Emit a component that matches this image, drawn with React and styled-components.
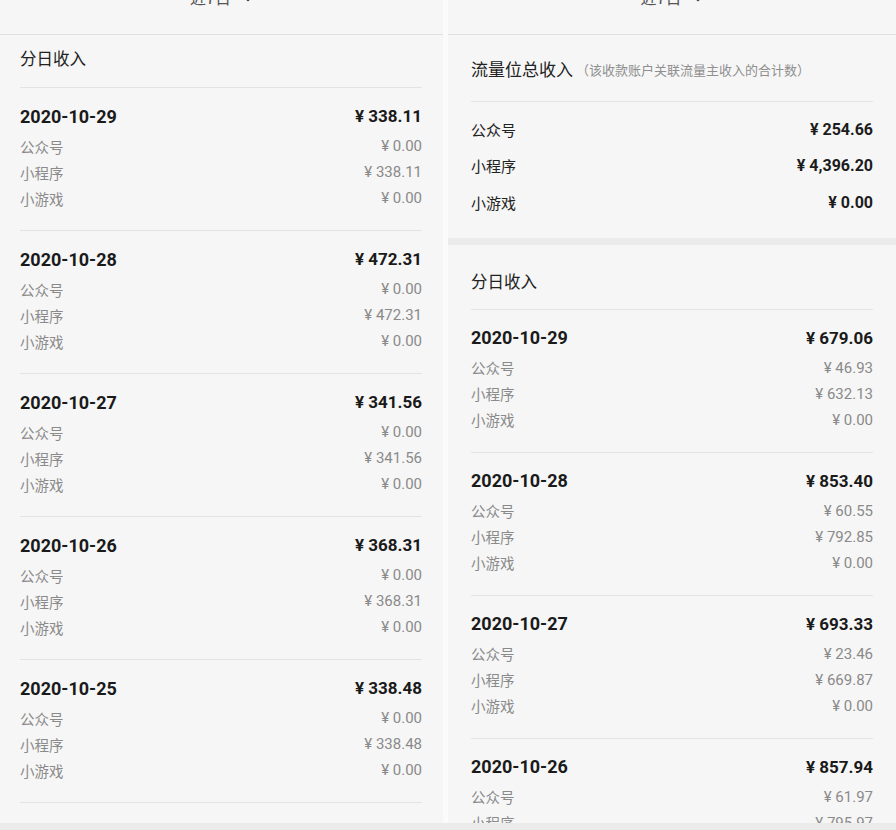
import React from "react";
import styled, { createGlobalStyle } from "styled-components";

const GlobalStyle = createGlobalStyle`
  html, body { margin: 0; padding: 0; background: #ebebeb; }
  body { font-family: Roboto, "Noto Sans CJK SC", "Noto Sans", sans-serif; }
  * { box-sizing: border-box; }
`;

const Screen = styled.div`
  width: 896px;
  height: 830px;
  overflow: hidden;
  background: #ebebeb;
`;

const Columns = styled.div`
  display: flex;
  gap: 5px;
  height: 823px;
  background: #fbfbfb;
`;

const Panel = styled.div`
  width: ${(p) => p.$width}px;
  flex: none;
  height: 100%;
  overflow: hidden;
  background: #f6f6f6;
  display: flex;
  flex-direction: column;
`;

const Header = styled.div`
  height: 35px;
  flex: none;
  border-bottom: 1px solid #e1e1e1;
  display: flex;
  justify-content: center;
  align-items: flex-start;
`;

const HeaderLabel = styled.div`
  margin-top: -15px;
  display: flex;
  align-items: center;
  gap: 12px;
  font-family: "Noto Sans CJK SC", Roboto, sans-serif;
  font-size: 16px;
  line-height: 24px;
  color: #555;
`;

const Content = styled.div`
  flex: none;
  padding: 0 ${(p) => p.$right}px 0 ${(p) => p.$left}px;
`;

const SectionTitle = styled.div`
  height: ${(p) => p.$top + p.$bottom + 25}px;
  padding: ${(p) => p.$top}px 0 ${(p) => p.$bottom}px;
  border-bottom: 1px solid #e3e3e3;
  font-family: "Noto Sans CJK SC", sans-serif;
  font-size: ${(p) => p.$size || 16.5}px;
  line-height: 24px;
  color: #222;
  display: flex;
  align-items: center;
  white-space: nowrap;
`;

const TitleNote = styled.span`
  font-size: 13px;
  line-height: 24px;
  color: #8f8f8f;
  margin-left: 3px;
  margin-top: 2px;
`;

const SummaryList = styled.div`
  padding: 9px 0 17px;
`;

const SummaryRow = styled.div`
  height: 36.5px;
  display: flex;
  align-items: center;
  justify-content: space-between;
`;

const SummaryLabel = styled.span`
  font-family: "Noto Sans CJK SC", sans-serif;
  font-size: 15px;
  color: #222;
`;

const SummaryValue = styled.span`
  font-family: Roboto, sans-serif;
  font-weight: 700;
  font-size: 16px;
  color: #1c1c1c;
`;

const Band = styled.div`
  height: 7px;
  flex: none;
  background: #ebebeb;
`;

const DayBlock = styled.div`
  padding: 16px 0 19px;
  border-bottom: 1px solid #e3e3e3;
`;

const DayHead = styled.div`
  height: 24px;
  margin-bottom: 5px;
  display: flex;
  align-items: center;
  justify-content: space-between;
  font-family: Roboto, sans-serif;
  font-weight: 700;
  color: #1a1a1a;
`;

const DayDate = styled.span`
  font-size: 18px;
`;

const DayTotal = styled.span`
  font-size: 17px;
`;

const SubRow = styled.div`
  height: 26px;
  display: flex;
  align-items: center;
  justify-content: space-between;
`;

const SubLabel = styled.span`
  font-family: "Noto Sans CJK SC", sans-serif;
  font-size: 14.5px;
  color: #8a8a8a;
`;

const SubValue = styled.span`
  font-family: Roboto, sans-serif;
  font-size: 15px;
  color: #8a8a8a;
`;

const Chevron = () => (
  <svg width="10" height="7" viewBox="0 0 10 7" style={{ marginTop: 2 }}>
    <path d="M1 1.2 L5 5.2 L9 1.2" fill="none" stroke="#444" strokeWidth="2" strokeLinecap="round" strokeLinejoin="round" />
  </svg>
);

const labels = ["公众号", "小程序", "小游戏"];

const leftDays = [
  ["2020-10-29", "338.11", ["0.00", "338.11", "0.00"]],
  ["2020-10-28", "472.31", ["0.00", "472.31", "0.00"]],
  ["2020-10-27", "341.56", ["0.00", "341.56", "0.00"]],
  ["2020-10-26", "368.31", ["0.00", "368.31", "0.00"]],
  ["2020-10-25", "338.48", ["0.00", "338.48", "0.00"]],
  ["2020-10-24", "404.47", ["0.00", "404.47", "0.00"]],
];

const rightDays = [
  ["2020-10-29", "679.06", ["46.93", "632.13", "0.00"]],
  ["2020-10-28", "853.40", ["60.55", "792.85", "0.00"]],
  ["2020-10-27", "693.33", ["23.46", "669.87", "0.00"]],
  ["2020-10-26", "857.94", ["61.97", "795.97", "0.00"]],
];

const summary = [
  ["公众号", "254.66"],
  ["小程序", "4,396.20"],
  ["小游戏", "0.00"],
];

const Day = ({ date, total, values }) => (
  <DayBlock>
    <DayHead>
      <DayDate>{date}</DayDate>
      <DayTotal>¥ {total}</DayTotal>
    </DayHead>
    {labels.map((l, i) => (
      <SubRow key={l}>
        <SubLabel>{l}</SubLabel>
        <SubValue>¥ {values[i]}</SubValue>
      </SubRow>
    ))}
  </DayBlock>
);

const PeriodHeader = () => (
  <Header>
    <HeaderLabel>
      <span>近7日</span>
      <Chevron />
    </HeaderLabel>
  </Header>
);

export default function App() {
  return (
    <Screen>
      <GlobalStyle />
      <Columns>
        <Panel $width={443}>
          <PeriodHeader />
          <Content $left={20} $right={21}>
            <SectionTitle $top={11} $bottom={17}>分日收入</SectionTitle>
            {leftDays.map(([d, t, v]) => (
              <Day key={d} date={d} total={t} values={v} />
            ))}
          </Content>
        </Panel>
        <Panel $width={448}>
          <PeriodHeader />
          <Content $left={23} $right={23}>
            <SectionTitle $top={22} $bottom={20} $size={17}>
              流量位总收入<TitleNote>（该收款账户关联流量主收入的合计数）</TitleNote>
            </SectionTitle>
            <SummaryList>
              {summary.map(([l, v]) => (
                <SummaryRow key={l}>
                  <SummaryLabel>{l}</SummaryLabel>
                  <SummaryValue>¥ {v}</SummaryValue>
                </SummaryRow>
              ))}
            </SummaryList>
          </Content>
          <Band />
          <Content $left={23} $right={23}>
            <SectionTitle $top={24} $bottom={16}>分日收入</SectionTitle>
            {rightDays.map(([d, t, v]) => (
              <Day key={d} date={d} total={t} values={v} />
            ))}
          </Content>
        </Panel>
      </Columns>
    </Screen>
  );
}
